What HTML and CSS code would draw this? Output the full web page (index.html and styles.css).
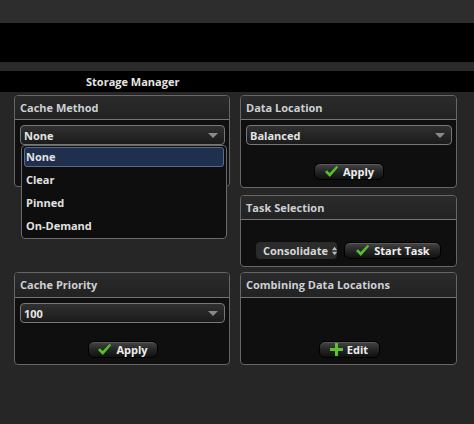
FILE: index.html
```html
<!DOCTYPE html>
<html>
<head>
<meta charset="utf-8">
<link rel="stylesheet" href="styles.css">
</head>
<body>
<div class="topbar"></div>
<div class="blackband"></div>
<div class="sepband"></div>
<div class="titlebar">Storage Manager</div>
<main class="grid">
  <section class="panel p-method">
    <div class="panel-head">Cache Method</div>
    <div class="panel-body">
      <div class="select-wrap">
        <div class="select"><span>None</span><span class="caret"></span></div>
        <ul class="dropdown">
          <li class="item selected">None</li>
          <li class="item">Clear</li>
          <li class="item">Pinned</li>
          <li class="item">On-Demand</li>
        </ul>
      </div>
    </div>
  </section>
  <div class="stack">
    <section class="panel p-location">
      <div class="panel-head">Data Location</div>
      <div class="panel-body">
        <div class="select"><span>Balanced</span><span class="caret"></span></div>
        <div class="btn-row">
          <button class="btn btn-apply"><svg class="check" viewBox="0 0 16 14" width="15" height="13"><path d="M1 7.5 L3.2 5.6 L6 8.6 L13.6 0.8 L15.2 2.3 L6.2 13 Z" fill="#57c12d"/></svg>Apply</button>
        </div>
      </div>
    </section>
    <section class="panel p-task">
      <div class="panel-head">Task Selection</div>
      <div class="panel-body task-row">
        <div class="mini-select">Consolidate<svg class="updown" viewBox="0 0 6 10" width="6" height="10"><path d="M0 4 L3 0 L6 4 Z M0 6 L3 10 L6 6 Z" fill="#bbb"/></svg></div>
        <button class="btn btn-start"><svg class="check" viewBox="0 0 16 14" width="15" height="13"><path d="M1 7.5 L3.2 5.6 L6 8.6 L13.6 0.8 L15.2 2.3 L6.2 13 Z" fill="#57c12d"/></svg>Start Task</button>
      </div>
    </section>
  </div>
  <section class="panel p-priority">
    <div class="panel-head">Cache Priority</div>
    <div class="panel-body">
      <div class="select"><span>100</span><span class="caret"></span></div>
      <div class="btn-row">
        <button class="btn btn-apply"><svg class="check" viewBox="0 0 16 14" width="15" height="13"><path d="M1 7.5 L3.2 5.6 L6 8.6 L13.6 0.8 L15.2 2.3 L6.2 13 Z" fill="#57c12d"/></svg>Apply</button>
      </div>
    </div>
  </section>
  <section class="panel p-combine">
    <div class="panel-head">Combining Data Locations</div>
    <div class="panel-body">
      <div class="btn-row edit-row">
        <button class="btn btn-edit"><svg class="plus" viewBox="0 0 13 13" width="13" height="13"><path d="M5 0 H8 V5 H13 V8 H8 V13 H5 V8 H0 V5 H5 Z" fill="#5cc232"/></svg>Edit</button>
      </div>
    </div>
  </section>
</main>
</body>
</html>
```

FILE: styles.css
```css
* { box-sizing: border-box; }
html, body { margin: 0; padding: 0; }
body {
  background: #262626;
  font-family: "Open Sans", "DejaVu Sans", sans-serif;
  font-size: 11px;
  font-weight: 700;
  color: #e2e2e2;
  width: 474px;
  height: 424px;
  overflow: hidden;
}
.topbar { height: 23px; background: #2d2d2d; }
.blackband { height: 39px; background: #000; }
.sepband { height: 9px; background: #2a2a2a; }
.titlebar {
  height: 21px;
  background: #000;
  padding-left: 86px;
  line-height: 21px;
  color: #e6e6e6;
  font-size: 11px;
}
.grid {
  display: grid;
  grid-template-columns: 216px 217px;
  column-gap: 10px;
  row-gap: 5px;
  padding: 3px 0 0 14px;
  align-items: start;
}
.stack { display: flex; flex-direction: column; gap: 7px; }
.panel {
  border: 1px solid #666;
  border-radius: 4px;
  background: #0f0f0f;
  display: flex;
  flex-direction: column;
}
.panel-head {
  height: 24px;
  line-height: 23px;
  padding-left: 5px;
  background: linear-gradient(#2b2b2b, #222);
  border-bottom: 1px solid #757575;
  border-radius: 3px 3px 0 0;
  color: #cdd0d5;
}
.panel-body { padding: 5px 4px 0 5px; flex: 1; }
.p-method { height: 92px; }
.p-location { height: 93px; }
.p-task { height: 72px; }
.p-priority, .p-combine { height: 93px; }
.p-priority .panel-head, .p-combine .panel-head { height: 25px; line-height: 24px; }

.select-wrap { position: relative; }
.select {
  height: 20px;
  border: 1px solid #777;
  border-radius: 4px;
  background: linear-gradient(#303030, #1b1b1b);
  display: flex;
  align-items: center;
  justify-content: space-between;
  padding: 0 6px 0 3px;
  color: #e4e4e4;
}
.caret {
  width: 0; height: 0;
  border-left: 5px solid transparent;
  border-right: 5px solid transparent;
  border-top: 5px solid #8a8a8a;
}
.dropdown {
  position: absolute;
  top: 20px;
  left: 1px;
  width: 206px;
  margin: 0;
  padding: 1px 2px 2px;
  list-style: none;
  background: #0e0e0e;
  border: 1px solid #6a6a6a;
  border-radius: 4px;
  z-index: 5;
}
.item {
  height: 20px;
  line-height: 18px;
  margin-bottom: 3px;
  padding-left: 1px;
  border: 1px solid transparent;
  border-radius: 3px;
  color: #e2e2e2;
}
.item:last-child { margin-bottom: 0; }
.item.selected { background: #1f2f4e; border-color: #5b6a86; }

.btn-row { display: flex; justify-content: center; margin-top: 18px; }
.edit-row { margin-top: 38px; }
.btn {
  display: flex;
  align-items: center;
  justify-content: center;
  gap: 4px;
  height: 17px;
  padding: 0;
  border: 1px solid #000;
  border-radius: 6px;
  background: linear-gradient(#454545, #262626 50%, #101010);
  box-shadow: inset 0 1px 0 rgba(255,255,255,0.12);
  color: #eee;
  font-family: inherit;
  font-size: 11px;
  font-weight: 700;
}
.btn-apply { width: 70px; }
.btn-edit { width: 61px; }
.btn-start { width: 97px; }
.task-row {
  display: flex;
  gap: 7px;
  padding: 22px 0 0 15px;
  align-items: flex-start;
}
.mini-select {
  height: 17px;
  width: 81px;
  border-radius: 4px;
  background: #2b2b2b;
  display: flex;
  align-items: center;
  gap: 4px;
  padding-left: 7px;
  color: #d8d8d8;
}
```
